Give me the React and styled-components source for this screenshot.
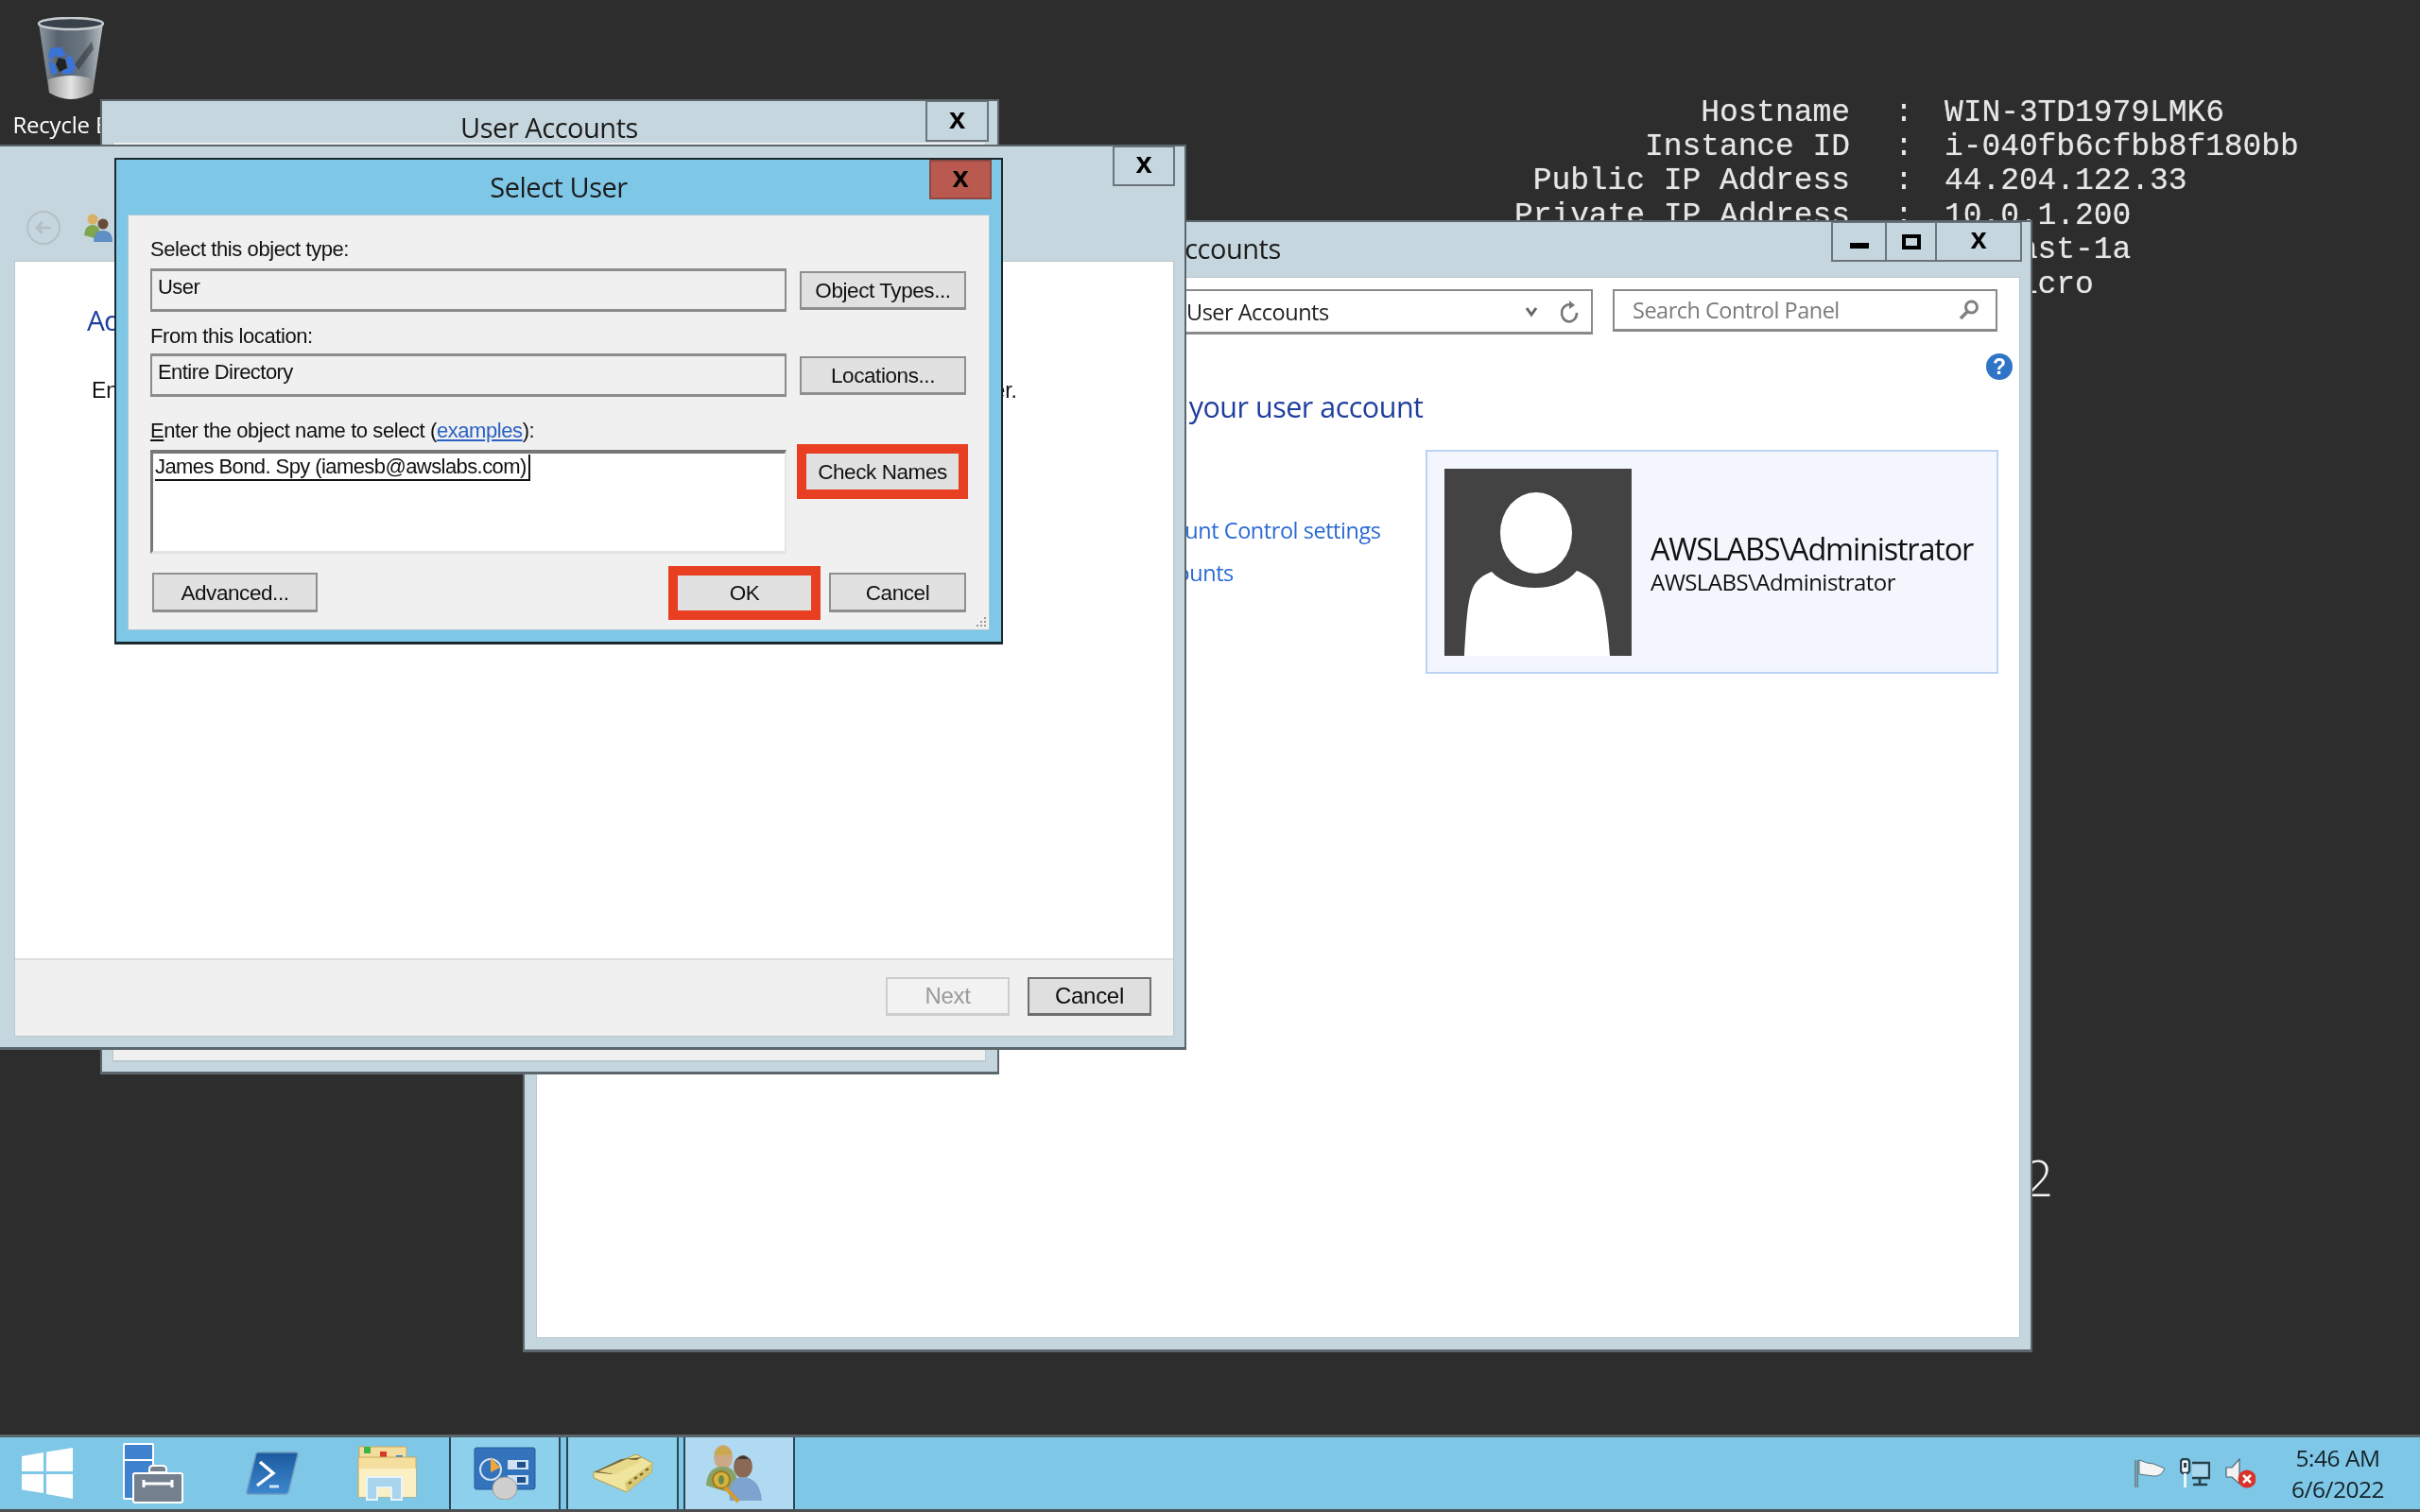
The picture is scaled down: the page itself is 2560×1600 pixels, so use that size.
import React from "react";
import styled, { createGlobalStyle } from "styled-components";

const Global = createGlobalStyle`
  html, body { margin: 0; padding: 0; background: #2d2d2d; }
  #root { width: 2560px; height: 1600px; overflow: hidden; }
  * { box-sizing: border-box; }
`;

const Desktop = styled.main`
  position: relative;
  width: 2560px;
  height: 1600px;
  background: #2d2d2d;
  display: flex;
  flex-direction: column;
  justify-content: flex-end;
  overflow: hidden;
  font-family: "Liberation Sans", Arial, sans-serif;
  filter: blur(0.55px);
`;

/* ---------- wallpaper ---------- */
const InfoBlock = styled.div`
  position: absolute;
  left: 1500px;
  top: 101px;
  display: grid;
  grid-template-columns: 457px 100px auto;
  grid-auto-rows: 36.4px;
  align-items: center;
  font-family: "Liberation Mono", monospace;
  font-size: 33px;
  letter-spacing: -0.08px;
  color: #e6e6e6;
  white-space: pre;
  text-shadow: 0 0 1px rgba(230, 230, 230, 0.6);
`;
const InfoKey = styled.span` text-align: right; `;
const InfoColon = styled.span` padding-left: 47px; `;
const InfoVal = styled.span``;

const Watermark = styled.div`
  position: absolute;
  right: 388px;
  top: 1210px;
  font-family: "Open Sans", sans-serif;
  font-weight: 300;
  font-size: 54px;
  line-height: 70px;
  color: #f2f2f2;
  white-space: nowrap;
`;

const DesktopIcon = styled.div`
  position: absolute;
  left: 10px;
  top: 18px;
  width: 130px;
  display: flex;
  flex-direction: column;
  align-items: center;
`;
const DesktopLabel = styled.span`
  color: #fff;
  font-size: 24px;
  line-height: 28px;
  margin-top: 10px;
  font-family: "Open Sans", sans-serif;
  letter-spacing: -0.2px;
`;

/* ---------- windows ---------- */
const Win = styled.section`
  position: absolute;
  left: ${p => p.$x}px;
  top: ${p => p.$y}px;
  width: ${p => p.$w}px;
  height: ${p => p.$h}px;
  background: ${p => p.$active ? "#7fc7e7" : "#c6d6de"};
  border: 2px solid ${p => p.$active ? "#1c2a30" : "#5c676d"};
  border-bottom-width: 3px;
  display: flex;
  flex-direction: column;
  padding: ${p => p.$pad};
`;
const TitleBar = styled.header`
  position: relative;
  height: ${p => p.$h}px;
  flex: none;
  display: flex;
  align-items: flex-start;
  justify-content: ${p => p.$left ? "flex-start" : "center"};
  padding-left: ${p => p.$left || 0}px;
`;
const TitleText = styled.h1`
  margin: ${p => p.$top}px 0 0;
  font-weight: 400;
  font-size: 29px;
  line-height: 38px;
  color: #1b1b1b;
  font-family: "Open Sans", sans-serif;
  letter-spacing: -0.47px;
  white-space: nowrap;
`;
const Caption = styled.div`
  position: absolute;
  top: 0;
  right: ${p => p.$r}px;
  display: flex;
  height: ${p => p.$h}px;
  border: 2px solid ${p => p.$hot ? "#8c4a42" : "#6a747a"};
  border-top-width: ${p => p.$hot ? 2 : 1}px;
  background: ${p => p.$hot ? "#b9594f" : "#c6d6de"};
`;
const CapBtn = styled.div`
  width: ${p => p.$w}px;
  display: flex;
  align-items: center;
  justify-content: center;
  & + & { border-left: 2px solid #6a747a; }
`;
const CloseX = styled.span`
  font-family: "Liberation Sans", sans-serif;
  font-weight: 700;
  font-size: 31px;
  line-height: 1;
  color: #000;
  margin-top: -6px;
`;
const MinBar = styled.span`
  width: 20px; height: 6px; background: #000; margin-top: 8px;
`;
const MaxBox = styled.span`
  width: 20px; height: 16px; border: 4px solid #000; margin-top: 0;
`;

/* wizard window */
const NavIcons = styled.div`
  position: absolute;
  left: 11px;
  top: 67px;
  display: flex;
  gap: 23px;
  align-items: center;
`;
const ClientWhite = styled.div`
  flex: 1;
  min-height: 0;
  background: #fff;
  display: flex;
  flex-direction: column;
  box-shadow: 0 0 0 1px #b9c7ce;
`;
const WizardBody = styled.div`
  flex: 1;
  padding: 38px 0 0 76px;
`;
const WizardHead = styled.h2`
  margin: 0;
  font-family: "Open Sans", sans-serif;
  font-weight: 400;
  font-size: 30px;
  line-height: 48px;
  color: #1f3f9e;
  letter-spacing: -1px;
`;
const WizardText = styled.p`
  margin: 34px 0 0 5px;
  width: 979px;
  font-size: 23px;
  line-height: 32px;
  color: #111;
  white-space: nowrap;
  text-align: justify;
  text-align-last: justify;
`;
const WizardFooter = styled.footer`
  height: 82px;
  flex: none;
  background: #f0f0f0;
  border-top: 2px solid #dedede;
  display: flex;
  justify-content: flex-end;
  align-items: flex-start;
  gap: 19px;
  padding: 18px 23px 0 0;
`;
const WizButton = styled.div`
  width: 131px;
  height: 41px;
  display: flex;
  align-items: center;
  justify-content: center;
  font-size: 24px;
  letter-spacing: -0.3px;
  background: ${p => p.$off ? "#f2f2f2" : "#dfdfdf"};
  color: ${p => p.$off ? "#9a9a9a" : "#0c0c0c"};
  border: 2px solid ${p => p.$off ? "#cdcdcd" : "#6f6f6f"};
  border-bottom-width: 3px;
`;

/* mid window */
const MidClient = styled.div`
  flex: 1;
  background: #f0f0f0;
  box-shadow: 0 1px 0 1px #b9c7ce;
`;

/* back window */
const CpToolbar = styled.div`
  display: flex;
  justify-content: flex-end;
  gap: 21px;
  padding: 12px 23px 0 0;
  height: 60px;
`;
const AddressBar = styled.div`
  width: 436px;
  height: 48px;
  border: 2px solid #8a8a8a;
  border-bottom-width: 3px;
  display: flex;
  align-items: center;
  padding: 0 12px 0 4px;
  font-family: "Open Sans", sans-serif;
  font-size: 23.5px;
  letter-spacing: -0.5px;
  color: #222;
`;
const SearchBar = styled(AddressBar)`
  width: 407px;
  height: 45px;
  padding: 0 16px 0 19px;
  color: #7a7a7a;
`;
const Grow = styled.span` flex: 1; white-space: nowrap; `;
const HelpRow = styled.div`
  display: flex;
  justify-content: flex-end;
  padding: 20px 7px 0 0;
  height: 48px;
`;
const HelpDot = styled.div`
  width: 28px;
  height: 28px;
  border-radius: 50%;
  background: #2f74c7;
  color: #fff;
  font-size: 23px;
  font-weight: 700;
  line-height: 28px;
  text-align: center;
`;
const CpHead = styled.h2`
  margin: 0;
  height: 58px;
  padding-left: 450px;
  text-align: left;
  font-family: "Open Sans", sans-serif;
  font-weight: 400;
  font-size: 30.5px;
  line-height: 56px;
  color: #1f3f9e;
  letter-spacing: -0.5px;
  white-space: nowrap;
`;
const CpRow = styled.div`
  display: flex;
  margin-top: 16px;
  padding-left: 495px;
`;
const LinkCol = styled.nav`
  width: 445px;
  padding-top: 69px;
  display: flex;
  flex-direction: column;
  gap: 13px;
  font-family: "Open Sans", sans-serif;
  font-size: 23.5px;
  line-height: 32px;
  letter-spacing: -0.45px;
  color: #2a6ad3;
`;
const UserCard = styled.div`
  width: 606px;
  height: 237px;
  background: #f3f7fd;
  border: 2px solid #bcd4f2;
  display: flex;
  align-items: center;
  padding-left: 18px;
  gap: 20px;
`;
const UserText = styled.div`
  display: flex;
  flex-direction: column;
  font-family: "Open Sans", sans-serif;
  color: #111;
`;
const UserName = styled.span`
  font-size: 32.5px;
  line-height: 43px;
  letter-spacing: -1.2px;
`;
const UserSub = styled.span`
  font-size: 24px;
  line-height: 28px;
  letter-spacing: -0.55px;
`;

/* dialog */
const DialogClient = styled.div`
  flex: 1;
  background: #f0f0f0;
  position: relative;
  padding: 24px 24px 0 23px;
  box-shadow: 0 0 0 1px #a9c8d8;
`;
const Form = styled.div`
  display: grid;
  grid-template-columns: 673px 176px;
  column-gap: 14px;
`;
const FieldLabel = styled.label`
  grid-column: 1 / -1;
  height: ${p => p.$h}px;
  margin-top: ${p => p.$mt || 0}px;
  padding-top: ${p => p.$pt || 0}px;
  font-size: 22px;
  line-height: 24px;
  letter-spacing: -0.42px;
  color: #111;
  white-space: nowrap;
`;
const Key = styled.span` text-decoration: underline; `;
const Link = styled.a`
  color: #2a62c4;
  text-decoration: underline;
`;
const ReadField = styled.div`
  height: 46px;
  background: #f0f0f0;
  border: 2px solid #8c8c8c;
  border-top-width: 3px;
  border-bottom-width: 3px;
  padding: 1px 6px 0;
  font-size: 22px;
  line-height: 32px;
  letter-spacing: -0.55px;
  color: #111;
`;
const Btn = styled.div`
  width: ${p => p.$w ? p.$w + "px" : "100%"};
  height: ${p => p.$h || 41}px;
  align-self: center;
  flex: none;
  background: #e1e1e1;
  border: ${p => p.$plain ? "none" : "2px solid #8f8f8f"};
  border-bottom-width: ${p => p.$plain ? 0 : 3}px;
  display: flex;
  align-items: center;
  justify-content: center;
  padding-top: 2px;
  font-size: 22.5px;
  letter-spacing: -0.42px;
  color: #111;
  white-space: nowrap;
`;
const NameBox = styled.div`
  height: 110px;
  background: #fff;
  border-top: 4px solid #777;
  border-left: 3px solid #777;
  border-right: 2px solid #e6e6e6;
  border-bottom: 3px solid #e2e2e2;
  padding: 1px 0 0 2px;
  font-size: 22px;
  line-height: 26px;
  color: #111;
`;
const NameToken = styled.span`
  display: inline-block;
  border-bottom: 2px solid #111;
  border-right: 2px solid #111;
  padding-right: 2px;
  letter-spacing: -0.58px;
`;
const Highlight = styled.div`
  flex: none;
  width: ${p => p.$w}px;
  height: ${p => p.$h}px;
  border: 10px solid #e83e22;
  margin: ${p => p.$m || 0};
  display: flex;
`;
const ActionRow = styled.div`
  height: 42px;
  margin: 20px 0 0 2px;
  display: flex;
  align-items: center;
`;
const Spacer = styled.div` flex: 1; `;
const Grip = styled.svg`
  position: absolute;
  right: 2px;
  bottom: 1px;
`;

/* taskbar */
const Taskbar = styled.footer`
  height: 82px;
  flex: none;
  background: #7fc7e7;
  border-top: 3px solid #59656b;
  border-bottom: 3px solid #4c4f51;
  display: flex;
  align-items: stretch;
`;
const Slot = styled.div`
  width: ${p => p.$w}px;
  flex: none;
  display: flex;
  align-items: center;
  justify-content: center;
`;
const TaskBtn = styled.div`
  width: ${p => p.$w}px;
  margin-left: ${p => p.$ml}px;
  flex: none;
  display: flex;
  align-items: center;
  justify-content: center;
  padding-right: ${p => p.$pr || 0}px;
  background: ${p => p.$on ? "#afdaf1" : "#8dd0ec"};
  border: 2px solid #2b4653;
  border-top: none;
  border-bottom: none;
`;
const Tray = styled.div`
  margin-left: auto;
  display: flex;
  align-items: center;
  gap: 16px;
  padding-right: 27px;
`;
const Clock = styled.div`
  margin-left: 11px;
  width: 120px;
  text-align: center;
  font-family: "Open Sans", sans-serif;
  font-size: 24.5px;
  line-height: 33px;
  letter-spacing: -0.5px;
  color: #152229;
`;

/* ---------- drawings ---------- */
const RecycleIcon = () => (
  <svg width="72" height="90" viewBox="0 0 72 90">
    <defs>
      <linearGradient id="rb" x1="0" x2="1">
        <stop offset="0" stopColor="#8c97a0" />
        <stop offset=".3" stopColor="#56636f" />
        <stop offset=".7" stopColor="#6b7680" />
        <stop offset="1" stopColor="#b9bfc4" />
      </linearGradient>
      <linearGradient id="rb2" x1="0" x2="1">
        <stop offset="0" stopColor="#9a9a9a" />
        <stop offset=".5" stopColor="#e4e4e4" />
        <stop offset="1" stopColor="#8a8a8a" />
      </linearGradient>
    </defs>
    <path d="M2 7 L13 80 Q36 94 59 80 L70 7 Z" fill="url(#rb)" />
    <path d="M12 66 Q36 58 60 66 L59 80 Q36 94 13 80 Z" fill="url(#rb2)" />
    <path d="M58 26 L40 50 L44 56 L60 34 Z" fill="#2b2f33" opacity=".55" />
    <g fill="#3a74d8">
      <path d="M14 33 L26 32 L31 40 L24 43 L19 40 L15 46 L12 42 Z" />
      <path d="M30 44 L36 40 L41 52 L38 60 L27 60 L27 56 L34 54 Z" />
      <path d="M12 46 L19 50 L22 60 L15 60 Z" />
    </g>
    <path d="M23 43 L30 45 L32 54 L24 58 L20 50 Z" fill="#1f2227" />
    <ellipse cx="36" cy="7" rx="34" ry="6" fill="#39424b" stroke="#c7cccf" strokeWidth="2.5" />
  </svg>
);

const BackCircle = () => (
  <svg width="38" height="38" viewBox="0 0 38 38" fill="none" stroke="#b5c0c6" strokeWidth="2">
    <circle cx="19" cy="19" r="17" />
    <path d="M27 19 H13 M18 13 L12 19 L18 25" strokeWidth="3" />
  </svg>
);

const PeopleSmall = () => (
  <svg width="32" height="32" viewBox="0 0 32 32">
    <circle cx="10" cy="7" r="5.5" fill="#d9b066" />
    <path d="M1 24 Q2 13 10 13 Q17 13 18 22 L12 27 Z" fill="#7fa64e" />
    <circle cx="21" cy="12" r="5.5" fill="#6a4a38" />
    <path d="M11 31 Q11 19 21 19 Q31 19 31 31 Z" fill="#5d8fc4" />
  </svg>
);

const Avatar = () => (
  <svg width="198" height="198" viewBox="0 0 198 198" style={{ flex: "none" }}>
    <rect width="198" height="198" fill="#434343" />
    <ellipse cx="97" cy="68" rx="38" ry="43" fill="#fff" />
    <path d="M21 198 C23 165 24 140 30 126 C34 117 42 112 50 109 C60 120 78 126 96 126 C114 126 130 120 140 108 C150 112 160 118 164 128 C170 145 173 170 175 198 Z" fill="#fff" />
  </svg>
);

const Chevron = () => (
  <svg width="14" height="12" viewBox="0 0 14 12" fill="none" stroke="#666" strokeWidth="3" style={{ marginRight: 22 }}>
    <path d="M2 2 L7 9 L12 2" />
  </svg>
);
const Refresh = () => (
  <svg width="22" height="26" viewBox="0 0 22 26" fill="none" stroke="#777" strokeWidth="2.6">
    <path d="M14 6 A8 9 0 1 0 19 14" />
    <path d="M11 1 L17 6 L11 10" fill="#777" stroke="none" />
  </svg>
);
const SearchGlass = () => (
  <svg width="24" height="24" viewBox="0 0 24 24" fill="none" stroke="#808080">
    <circle cx="14.5" cy="9" r="6" strokeWidth="3" />
    <path d="M10 14 L3 21" strokeWidth="3.5" />
  </svg>
);

const WinLogo = () => (
  <svg width="56" height="54" viewBox="0 0 56 54" fill="#fff">
    <path d="M1 9 L24 5 V25 H1 Z" />
    <path d="M27 4.5 L55 0 V25 H27 Z" />
    <path d="M1 28 H24 V48 L1 44.5 Z" />
    <path d="M27 28 H55 V54 L27 49 Z" />
  </svg>
);
const ServerMgr = () => (
  <svg width="64" height="64" viewBox="0 0 64 64">
    <rect x="1" y="1" width="31" height="58" rx="1" fill="#3f83cf" stroke="#fff" strokeWidth="2" />
    <path d="M1 18 H32" stroke="#fff" strokeWidth="2" />
    <path d="M28 28 q0 -4 4 -4 h10 q4 0 4 4 v3 h-18z" fill="#74808d" stroke="#fff" strokeWidth="2" />
    <rect x="11" y="32" width="52" height="31" rx="2" fill="#74808d" stroke="#fff" strokeWidth="2" />
    <path d="M22 43 H52 M22 39 V47 M52 39 V47" stroke="#fff" strokeWidth="3" />
  </svg>
);
const PowerShell = () => (
  <svg width="56" height="46" viewBox="0 0 56 46">
    <defs>
      <linearGradient id="ps" x1="0" y1="0" x2="0" y2="1">
        <stop offset="0" stopColor="#1c5a9e" /><stop offset="1" stopColor="#3c87cf" />
      </linearGradient>
    </defs>
    <path d="M11 2 Q12 1 14 1 H53 Q55 1 55 3 L45 43 Q44 45 42 45 H3 Q1 45 1 43 Z" fill="url(#ps)" stroke="#6f9cc0" strokeWidth="1.5" />
    <path d="M15 11 L29 23 L12 36" fill="none" stroke="#fff" strokeWidth="3.4" />
    <path d="M25 37 H35" stroke="#cfe6f7" strokeWidth="3" />
  </svg>
);
const Explorer = () => (
  <svg width="64" height="58" viewBox="0 0 64 58">
    <rect x="2" y="1" width="50" height="16" fill="#f2dd9d" stroke="#c9a85c" />
    <rect x="7" y="1" width="7" height="7" fill="#39b54a" />
    <rect x="24" y="6" width="7" height="7" fill="#d83a2a" />
    <rect x="41" y="10" width="7" height="7" fill="#2b86e0" />
    <path d="M1 12 H62 V54 H1 Z" fill="#f4df9f" stroke="#c9a85c" />
    <path d="M2 24 H62 V54 H2 Z" fill="#fbefc4" />
    <path d="M10 33 H47 V57 H36 V44 H21 V57 H10 Z" fill="#a8d4ee" stroke="#e8f4fb" strokeWidth="2" />
  </svg>
);
const ControlPanel = () => (
  <svg width="66" height="56" viewBox="0 0 66 56">
    <rect x="1" y="1" width="64" height="44" rx="2" fill="#3273bb" stroke="#265c97" />
    <circle cx="18" cy="24" r="11" fill="none" stroke="#cfe1f2" strokeWidth="2" />
    <path d="M18 11 L28 22 L18 27 Z" fill="#f2a73b" />
    <rect x="36" y="14" width="22" height="10" fill="#cfe1f2" />
    <rect x="36" y="30" width="22" height="10" fill="#cfe1f2" />
    <rect x="46" y="16" width="9" height="6" fill="#1e4e8c" />
    <rect x="46" y="32" width="9" height="6" fill="#1e4e8c" />
    <ellipse cx="33" cy="44" rx="13" ry="12" fill="#cfcfcf" stroke="#9a9a9a" />
  </svg>
);
const BookIcon = () => (
  <svg width="64" height="42" viewBox="0 0 64 42">
    <path d="M1 20 L46 1 L63 10 L62 20 L36 41 L1 26 Z" fill="#f0e59f" stroke="#b59b44" />
    <path d="M1 20 L30 6 L52 4 L20 22 Z" fill="#75693a" />
    <path d="M6 19 L36 6 L52 8 L24 22 Z" fill="#e8d98a" />
    <path d="M36 41 L62 20 L63 10 L34 31 Z" fill="#d9c873" />
    <path d="M38 32 l3 -2 M44 27 l3 -2 M50 23 l3 -2 M56 18 l3 -2" stroke="#7d6c2a" strokeWidth="2.4" />
  </svg>
);
const UsersKey = () => (
  <svg width="62" height="62" viewBox="0 0 62 62">
    <ellipse cx="20" cy="14" rx="10" ry="13" fill="#cba987" />
    <path d="M11 8 Q20 -3 29 8 L28 12 H12 Z" fill="#c9a84f" />
    <path d="M2 44 Q3 24 20 24 Q34 24 36 44 L22 50 Z" fill="#8aa267" />
    <ellipse cx="41" cy="24" rx="10" ry="12" fill="#8a6a54" />
    <path d="M31 22 Q41 3 51 22 L48 16 H34 Z" fill="#3d3532" />
    <path d="M27 60 Q24 36 41 35 Q59 36 61 60 Z" fill="#7ea3cf" />
    <circle cx="18" cy="38" r="9" fill="#d8b23f" stroke="#9b7b1e" strokeWidth="2" />
    <ellipse cx="18" cy="38" rx="3" ry="5" fill="#6d8a4a" />
    <path d="M22 46 L36 61" stroke="#d89a2a" strokeWidth="4" />
  </svg>
);
const FlagIcon = () => (
  <svg width="32" height="32" viewBox="0 0 32 32">
    <path d="M2 2 V31" stroke="#27414d" strokeWidth="3" />
    <path d="M5 2 Q14 6 20 6 L32 11 Q28 20 20 19 Q12 18 5 17 Z" fill="#f4f4f4" stroke="#3a5561" strokeWidth=".8" />
    <path d="M2 2 V31" stroke="#f0f0f0" strokeWidth="1" />
  </svg>
);
const NetIcon = () => (
  <svg width="32" height="32" viewBox="0 0 32 32" fill="none">
    <rect x="1" y="1" width="9" height="15" rx="3" stroke="#27414d" strokeWidth="2.4" fill="#eef6fa" />
    <rect x="4" y="5" width="3" height="5" fill="#27414d" />
    <path d="M5.5 16 V31" stroke="#eef6fa" strokeWidth="3" />
    <path d="M13 5 H31 V21 H13" stroke="#27414d" strokeWidth="2.4" fill="#a7d8ee" />
    <path d="M21 21 V27 M14 28 H29" stroke="#27414d" strokeWidth="2.6" />
  </svg>
);
const SpeakerIcon = () => (
  <svg width="32" height="32" viewBox="0 0 32 32">
    <path d="M1 10 H7 L15 1 V27 L7 20 H1 Z" fill="#f1f1f1" stroke="#4d6773" strokeWidth="1.2" />
    <circle cx="23" cy="22" r="9.5" fill="#d8322a" />
    <path d="M19 18 L27 26 M27 18 L19 26" stroke="#fff" strokeWidth="2.6" />
  </svg>
);

const info = [
  ["Hostname", "WIN-3TD1979LMK6"],
  ["Instance ID", "i-040fb6cfbb8f180bb"],
  ["Public IP Address", "44.204.122.33"],
  ["Private IP Address", "10.0.1.200"],
  ["Availability Zone", "us-east-1a"],
  ["Instance Size", "t2.micro"],
];

export default function App() {
  return (
    <>
      <Global />
      <Desktop>
        <InfoBlock>
          {info.map(([k, v]) => (
            <React.Fragment key={k}>
              <InfoKey>{k}</InfoKey>
              <InfoColon>:</InfoColon>
              <InfoVal>{v}</InfoVal>
            </React.Fragment>
          ))}
        </InfoBlock>
        <Watermark>Windows Server 2012</Watermark>

        <DesktopIcon>
          <RecycleIcon />
          <DesktopLabel>Recycle Bin</DesktopLabel>
        </DesktopIcon>

        {/* Control panel window */}
        <Win $x={553} $y={233} $w={1597} $h={1198} $pad="0 12px 13px 13px">
          <TitleBar $h={59} $left={599}>
            <TitleText $top={9}>User Accounts</TitleText>
            <Caption $r={-3} $h={42}>
              <CapBtn $w={55}><MinBar /></CapBtn>
              <CapBtn $w={53}><MaxBox /></CapBtn>
              <CapBtn $w={90}><CloseX>x</CloseX></CapBtn>
            </Caption>
          </TitleBar>
          <ClientWhite>
            <CpToolbar>
              <AddressBar>
                <Grow>User Accounts</Grow>
                <Chevron />
                <Refresh />
              </AddressBar>
              <SearchBar>
                <Grow>Search Control Panel</Grow>
                <SearchGlass />
              </SearchBar>
            </CpToolbar>
            <HelpRow><HelpDot>?</HelpDot></HelpRow>
            <CpHead>Make changes to your user account</CpHead>
            <CpRow>
              <LinkCol>
                <span>Change User Account Control settings</span>
                <span>Manage User Accounts</span>
              </LinkCol>
              <UserCard>
                <Avatar />
                <UserText>
                  <UserName>AWSLABS\Administrator</UserName>
                  <UserSub>AWSLABS\Administrator</UserSub>
                </UserText>
              </UserCard>
            </CpRow>
          </ClientWhite>
        </Win>

        {/* User Accounts window */}
        <Win $x={106} $y={105} $w={951} $h={1032} $pad="0 13px 12px 12px">
          <TitleBar $h={44}>
            <TitleText $top={9}>User Accounts</TitleText>
            <Caption $r={-4} $h={43}>
              <CapBtn $w={63}><CloseX>x</CloseX></CapBtn>
            </Caption>
          </TitleBar>
          <MidClient />
        </Win>

        {/* Add user wizard */}
        <Win $x={-2} $y={153} $w={1257} $h={958} $pad="0 12px 12px 16px">
          <TitleBar $h={122}>
            <NavIcons>
              <BackCircle />
              <PeopleSmall />
            </NavIcons>
            <Caption $r={-2} $h={42}>
              <CapBtn $w={62}><CloseX>x</CloseX></CapBtn>
            </Caption>
          </TitleBar>
          <ClientWhite>
            <WizardBody>
              <WizardHead>Add a User</WizardHead>
              <WizardText>Enter the user name and domain for this account, then click Next, or Browse to locate the user.</WizardText>
            </WizardBody>
            <WizardFooter>
              <WizButton $off>Next</WizButton>
              <WizButton>Cancel</WizButton>
            </WizardFooter>
          </ClientWhite>
        </Win>

        {/* Select User dialog */}
        <Win $x={121} $y={167} $w={940} $h={515} $pad="0 13px 13px 13px" $active>
          <TitleBar $h={59}>
            <TitleText $top={10}>Select User</TitleText>
            <Caption $r={-3} $h={42} $hot>
              <CapBtn $w={62}><CloseX>x</CloseX></CapBtn>
            </Caption>
          </TitleBar>
          <DialogClient>
            <Form>
              <FieldLabel $h={32}>Select this object type:</FieldLabel>
              <ReadField>User</ReadField>
              <Btn>Object Types...</Btn>

              <FieldLabel $h={30} $mt={14}>From this location:</FieldLabel>
              <ReadField>Entire Directory</ReadField>
              <Btn>Locations...</Btn>

              <FieldLabel $h={36} $mt={20} $pt={4}>
                <Key>E</Key>nter the object name to select (<Link>examples</Link>):
              </FieldLabel>
              <NameBox><NameToken>James Bond. Spy (iamesb@awslabs.com)</NameToken></NameBox>
              <Highlight $w={181} $h={58} $m="-6px 0 0 -3px">
                <Btn $h={38} $plain>Check Names</Btn>
              </Highlight>
            </Form>
            <ActionRow>
              <Btn $w={175} $h={42}>Advanced...</Btn>
              <Spacer />
              <Highlight $w={161} $h={57} $m="0 9px 0 0">
                <Btn $h={37} $plain>OK</Btn>
              </Highlight>
              <Btn $w={145} $h={42}>Cancel</Btn>
            </ActionRow>
            <Grip width="14" height="14" viewBox="0 0 14 14" fill="#9a9a9a">
              <rect x="11" y="2" width="2" height="2" />
              <rect x="7" y="6" width="2" height="2" />
              <rect x="11" y="6" width="2" height="2" />
              <rect x="3" y="10" width="2" height="2" />
              <rect x="7" y="10" width="2" height="2" />
              <rect x="11" y="10" width="2" height="2" />
            </Grip>
          </DialogClient>
        </Win>

        <Taskbar>
          <Slot $w={100}><WinLogo /></Slot>
          <Slot $w={124}><ServerMgr /></Slot>
          <Slot $w={128}><PowerShell /></Slot>
          <Slot $w={116}><Explorer /></Slot>
          <TaskBtn $w={118} $ml={7}><ControlPanel /></TaskBtn>
          <TaskBtn $w={119} $ml={6}><BookIcon /></TaskBtn>
          <TaskBtn $w={118} $ml={5} $pr={12} $on><UsersKey /></TaskBtn>
          <Tray>
            <FlagIcon />
            <NetIcon />
            <SpeakerIcon />
            <Clock>5:46 AM<br />6/6/2022</Clock>
          </Tray>
        </Taskbar>
      </Desktop>
    </>
  );
}
